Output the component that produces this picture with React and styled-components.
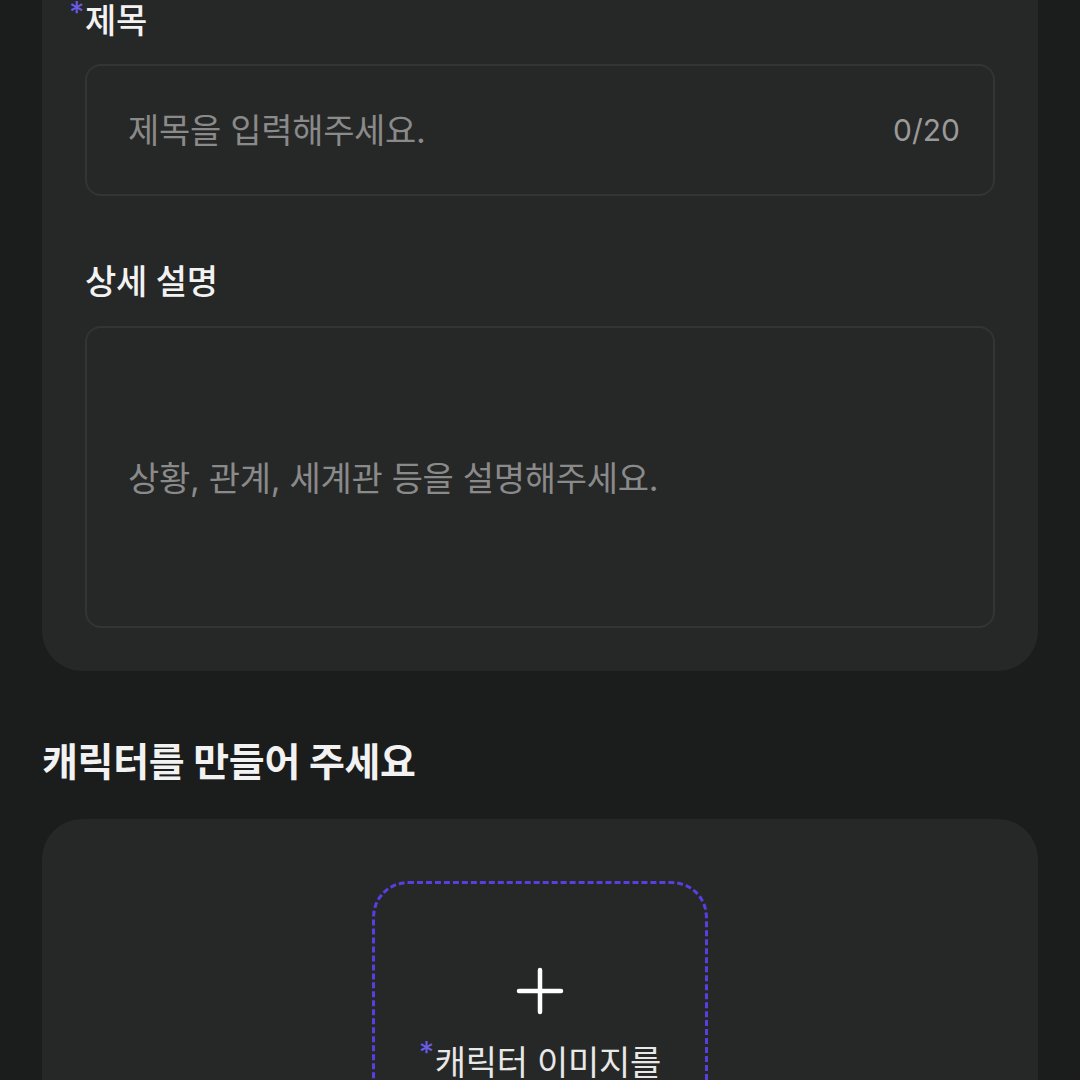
import React, { useState } from "react";
import styled, { createGlobalStyle } from "styled-components";

const GlobalStyle = createGlobalStyle`
    html, body {
        margin: 0;
        padding: 0;
        background-color: #1b1c1c;
        font-family: "Inter", "Noto Sans CJK KR", sans-serif;
        overflow: hidden;
    }
    * {
        box-sizing: border-box;
    }
`;

const Page = styled.div`
    width: 1080px;
    height: 1080px;
    padding: 0 42px;
    display: flex;
    flex-direction: column;
    background-color: #1b1c1c;
`;

const Card = styled.section`
    background-color: #262727;
    border-radius: 40px;
    padding: ${({ top }) => top || 43}px 43px 43px;
    margin-top: ${({ offset }) => offset || 0}px;
    display: flex;
    flex-direction: column;
`;

const Label = styled.label`
    position: relative;
    display: block;
    font-size: 34px;
    line-height: 44px;
    font-weight: 500;
    color: #f2f2f2;
    letter-spacing: -0.3px;
    margin: ${({ spaced }) => (spaced ? "64px 0 22px" : "0 0 21px")};
`;

const Required = styled.span`
    position: absolute;
    right: 100%;
    top: -2px;
    margin-right: 1px;
    font-size: 30px;
    line-height: 30px;
    font-weight: 400;
    color: #6b5ce7;
`;

const InputBox = styled.div`
    height: 132px;
    border: 2px solid #333434;
    border-radius: 16px;
    display: flex;
    align-items: center;
    padding: 0 33px 0 41px;
    gap: 16px;
`;

const TextInput = styled.input`
    flex: 1;
    min-width: 0;
    background: transparent;
    border: none;
    outline: none;
    color: #f2f2f2;
    font-family: inherit;
    font-size: 34px;
    letter-spacing: -0.3px;
    padding: 0;

    &::placeholder {
        color: #8a8a8a;
    }
`;

const Counter = styled.span`
    font-size: 30px;
    color: #9a9a9a;
`;

const TextArea = styled.textarea`
    height: 302px;
    width: 100%;
    resize: none;
    background: transparent;
    border: 2px solid #333434;
    border-radius: 16px;
    outline: none;
    color: #f2f2f2;
    font-family: inherit;
    font-size: 34px;
    line-height: 40px;
    letter-spacing: -0.3px;
    padding: 131px 41px 0;

    &::placeholder {
        color: #8a8a8a;
    }
`;

const Heading = styled.h2`
    margin: 66px 0 32px;
    font-size: 39px;
    line-height: 50px;
    font-weight: 700;
    color: #f2f2f2;
    letter-spacing: -0.3px;
`;

const Uploader = styled.button`
    align-self: center;
    width: 336px;
    height: 336px;
    border: 3px dashed #5a3fe0;
    border-radius: 36px;
    background: transparent;
    cursor: pointer;
    display: flex;
    flex-direction: column;
    align-items: center;
    padding: 83px 0 0;
    font-family: inherit;
`;

const PlusIcon = styled.svg`
    width: 48px;
    height: 48px;
    color: #ffffff;
`;

const UploadText = styled.span`
    margin-top: 26px;
    font-size: 34px;
    line-height: 44px;
    font-weight: 400;
    color: #e8e8e8;
    letter-spacing: -0.3px;
`;

const InlineRequired = styled.span`
    position: relative;
    top: -12px;
    font-size: 30px;
    color: #6b5ce7;
    margin-right: 1px;
`;

export default function App() {
    const [title, setTitle] = useState("");
    const [desc, setDesc] = useState("");

    return (
        <>
            <GlobalStyle />
            <Page>
                <Card offset={-44} top={43}>
                    <Label>
                        <Required>*</Required>
                        제목
                    </Label>
                    <InputBox>
                        <TextInput
                            value={title}
                            maxLength={20}
                            onChange={(e) => setTitle(e.target.value)}
                            placeholder="제목을 입력해주세요."
                        />
                        <Counter>{title.length}/20</Counter>
                    </InputBox>
                    <Label spaced>상세 설명</Label>
                    <TextArea
                        value={desc}
                        onChange={(e) => setDesc(e.target.value)}
                        placeholder="상황, 관계, 세계관 등을 설명해주세요."
                    />
                </Card>
                <Heading>캐릭터를 만들어 주세요</Heading>
                <Card top={62}>
                    <Uploader type="button">
                        <PlusIcon viewBox="0 0 48 48" fill="none" stroke="currentColor" strokeWidth="4.5" strokeLinecap="round">
                            <path d="M24 3v42M3 24h42" />
                        </PlusIcon>
                        <UploadText>
                            <InlineRequired>*</InlineRequired>
                            캐릭터 이미지를
                        </UploadText>
                    </Uploader>
                </Card>
            </Page>
        </>
    );
}
